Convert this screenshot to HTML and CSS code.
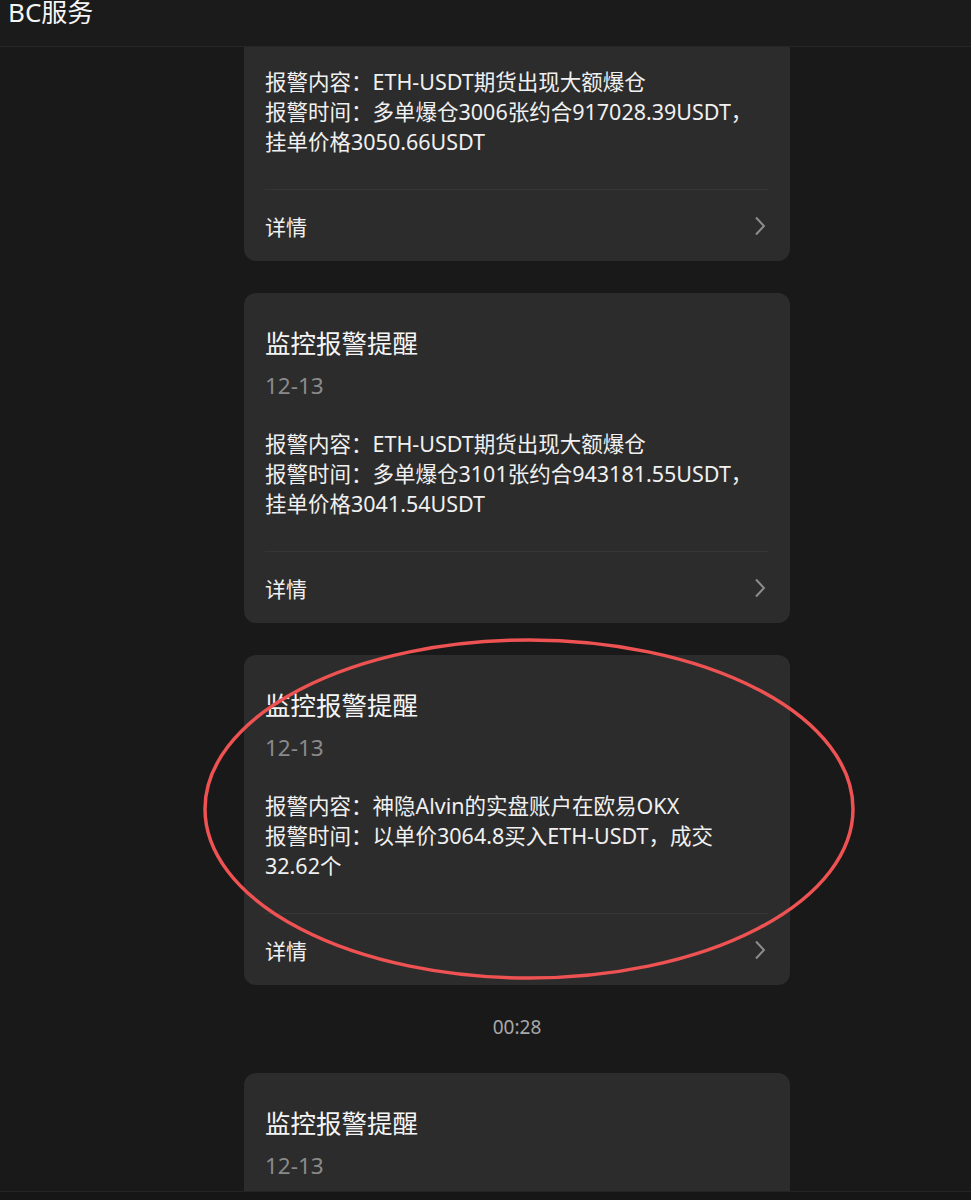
FILE: index.html
```html
<!DOCTYPE html>
<html lang="zh-CN">
<head>
<meta charset="utf-8">
<title>BC服务</title>
<link rel="stylesheet" href="styles.css">
</head>
<body>
<div class="app">
  <header class="topbar"><span class="topbar-title">BC服务</span></header>
  <main class="feed">
    <div class="feed-inner">
      <section class="card first">
        <h2 class="card-title">监控报警提醒</h2>
        <div class="card-date">12-13</div>
        <div class="card-body">
          <div>报警内容：ETH-USDT期货出现大额爆仓</div>
          <div>报警时间：多单爆仓3006张约合917028.39USDT，</div>
          <div>挂单价格3050.66USDT</div>
        </div>
        <div class="card-footer"><span>详情</span><svg class="chev" width="12" height="20" viewBox="0 0 12 20"><path d="M2 1.5 L10 10 L2 18.5" fill="none" stroke="#8c8c8c" stroke-width="2"/></svg></div>
      </section>
      <section class="card">
        <h2 class="card-title">监控报警提醒</h2>
        <div class="card-date">12-13</div>
        <div class="card-body">
          <div>报警内容：ETH-USDT期货出现大额爆仓</div>
          <div>报警时间：多单爆仓3101张约合943181.55USDT，</div>
          <div>挂单价格3041.54USDT</div>
        </div>
        <div class="card-footer"><span>详情</span><svg class="chev" width="12" height="20" viewBox="0 0 12 20"><path d="M2 1.5 L10 10 L2 18.5" fill="none" stroke="#8c8c8c" stroke-width="2"/></svg></div>
      </section>
      <section class="card">
        <h2 class="card-title">监控报警提醒</h2>
        <div class="card-date">12-13</div>
        <div class="card-body">
          <div>报警内容：神隐Alvin的实盘账户在欧易OKX</div>
          <div>报警时间：以单价3064.8买入ETH-USDT，成交</div>
          <div>32.62个</div>
        </div>
        <div class="card-footer"><span>详情</span><svg class="chev" width="12" height="20" viewBox="0 0 12 20"><path d="M2 1.5 L10 10 L2 18.5" fill="none" stroke="#8c8c8c" stroke-width="2"/></svg></div>
      </section>
      <div class="time-sep">00:28</div>
      <section class="card">
        <h2 class="card-title">监控报警提醒</h2>
        <div class="card-date">12-13</div>
        <div class="card-body">
          <div>报警内容：ETH-USDT期货出现大额爆仓</div>
        </div>
      </section>
    </div>
  </main>
  <div class="bottombar"></div>
  <svg class="mark" width="971" height="1200" viewBox="0 0 971 1200">
    <ellipse cx="529" cy="809" rx="324" ry="169" fill="none" stroke="#ee5252" stroke-width="3.5"/>
  </svg>
</div>
</body>
</html>
```

FILE: styles.css
```css
* { box-sizing: border-box; }
html, body {
  margin: 0;
  padding: 0;
  background: #191919;
  color: #f2f2f2;
  font-family: "Noto Sans", "Noto Sans CJK SC", sans-serif;
}
.app {
  position: relative;
  width: 971px;
  height: 1200px;
  overflow: hidden;
  display: flex;
  flex-direction: column;
}
.topbar {
  height: 47px;
  flex: none;
  background: #1b1b1b;
  border-bottom: 1px solid #262626;
  position: relative;
  z-index: 2;
}
.topbar-title {
  display: block;
  padding-left: 8px;
  font-size: 26px;
  line-height: 26px;
  margin-top: -1px;
  color: #f5f5f5;
}
.feed {
  flex: 1;
  overflow: hidden;
  padding-left: 244px;
}
.feed-inner {
  width: 546px;
  display: flex;
  flex-direction: column;
  gap: 32px;
}
.card {
  background: #2c2c2c;
  border-radius: 12px;
  padding: 30px 22px 0 21px;
}
.card.first { margin-top: -116px; }
.card-title {
  margin: 0;
  font-weight: 400;
  font-size: 25.5px;
  line-height: 40px;
  color: #f5f5f5;
}
.card-date {
  margin-top: 8px;
  font-size: 22.5px;
  line-height: 30px;
  color: #8a8a8a;
}
.card-body {
  margin-top: 28px;
  font-size: 21.5px;
  line-height: 30px;
  color: #f0f0f0;
  white-space: nowrap;
}
.card-footer {
  margin-top: 32px;
  height: 72px;
  border-top: 1px solid #363636;
  display: flex;
  align-items: center;
  justify-content: space-between;
  font-size: 21px;
  color: #f0f0f0;
}
.chev { margin-right: 2px; }
.time-sep {
  margin: -32px 0;
  height: 88px;
  display: flex;
  align-items: center;
  justify-content: center;
  padding-bottom: 4px;
  font-size: 19px;
  color: #a8a8a8;
}
.card:last-child { height: 200px; }
.bottombar {
  position: absolute;
  left: 0;
  right: 0;
  bottom: 0;
  height: 9px;
  background: #161616;
  border-top: 1px solid #242424;
}
.mark {
  position: absolute;
  left: 0;
  top: 0;
  pointer-events: none;
}
```
